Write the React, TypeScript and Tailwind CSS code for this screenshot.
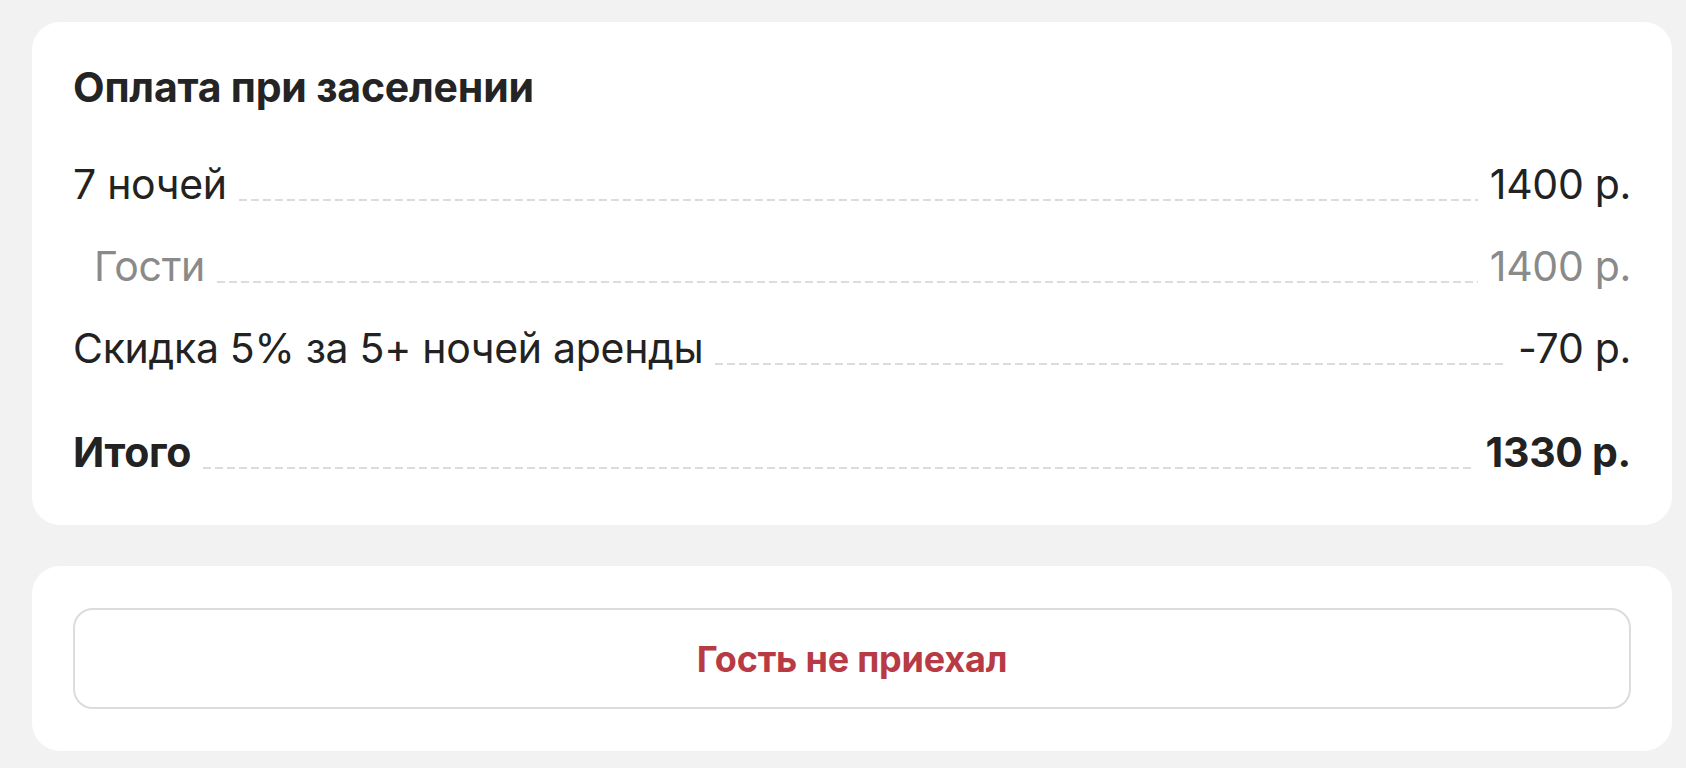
import React from "react";

const dash =
  "flex-1 mx-[12px] h-[2px] self-end mb-[8px] bg-[linear-gradient(to_right,#dcdcdc_8px,transparent_8px)] bg-[length:12px_2px] bg-repeat-x";

function Row({
  label,
  value,
  className = "",
  labelClass = "",
}: {
  label: string;
  value: string;
  className?: string;
  labelClass?: string;
}) {
  return (
    <div className={`flex items-end leading-[49px] ${className}`}>
      <span className={`whitespace-nowrap ${labelClass}`}>{label}</span>
      <span className={dash} />
      <span className="whitespace-nowrap">{value}</span>
    </div>
  );
}

export default function App() {
  return (
    <div
      className="min-h-screen w-full bg-[#f2f2f2] pt-[22px] pb-[19px] pl-[32px] pr-[14px] text-[#222222]"
      style={{ fontFamily: "Inter, 'Noto Sans', sans-serif" }}
    >
      <div className="rounded-[28px] bg-white px-[41px] pt-[41px] pb-[48px]">
        <h2 className="text-[41px] leading-[49px] font-bold text-[#242424] tracking-[-0.2px]">
          Оплата при заселении
        </h2>
        <div className="mt-[48px] flex flex-col gap-[33px] text-[41px] tracking-[-0.3px]">
          <Row label="7 ночей" value="1400 р." />
          <Row
            label="Гости"
            value="1400 р."
            className="text-[#8a8a8a]"
            labelClass="pl-[21px]"
          />
          <Row label="Скидка 5% за 5+ ночей аренды" value="-70 р." />
          <Row
            label="Итого"
            value="1330 р."
            className="mt-[22px] font-bold"
          />
        </div>
      </div>
      <div className="mt-[41px] rounded-[28px] bg-white px-[41px] py-[42px]">
        <button className="flex h-[101px] w-full items-center justify-center rounded-[20px] border-2 border-[#dcdcdc] bg-white text-[36px] font-bold text-[#b73a45] tracking-[-0.2px]">
          Гость не приехал
        </button>
      </div>
    </div>
  );
}
